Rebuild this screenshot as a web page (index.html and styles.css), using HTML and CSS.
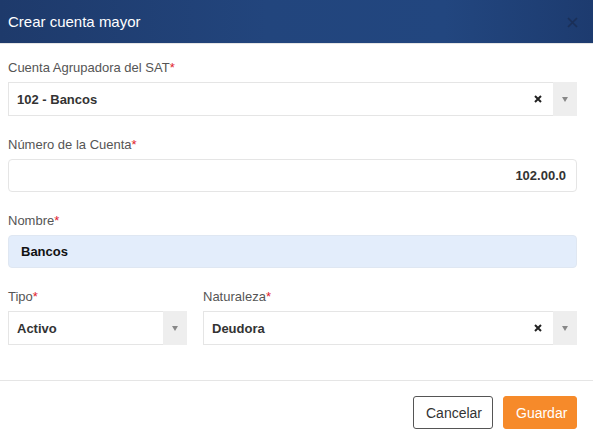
FILE: index.html
```html
<!DOCTYPE html>
<html lang="es">
<head>
<meta charset="utf-8">
<title>Crear cuenta mayor</title>
<link rel="stylesheet" href="styles.css">
</head>
<body>
<div class="modal">
  <div class="modal-header">
    <h4 class="modal-title">Crear cuenta mayor</h4>
    <span class="close-btn">
      <svg width="11" height="11" viewBox="0 0 11 11"><path d="M1 1L10 10M10 1L1 10" stroke="#1a2f57" stroke-width="1.7" fill="none"/></svg>
    </span>
  </div>
  <div class="modal-body">
    <div class="field">
      <label class="label">Cuenta Agrupadora del SAT<span class="req">*</span></label>
      <div class="select">
        <span class="select-value">102 - Bancos</span>
        <span class="select-clear"><svg width="8" height="8" viewBox="0 0 8 8"><path d="M1 1L7 7M7 1L1 7" stroke="#222" stroke-width="2" fill="none"/></svg></span>
        <span class="select-arrow"><span class="tri"></span></span>
      </div>
    </div>
    <div class="field">
      <label class="label">Número de la Cuenta<span class="req">*</span></label>
      <div class="input input-right">102.00.0</div>
    </div>
    <div class="field">
      <label class="label">Nombre<span class="req">*</span></label>
      <div class="input input-filled">Bancos</div>
    </div>
    <div class="row">
      <div class="field col-tipo">
        <label class="label">Tipo<span class="req">*</span></label>
        <div class="select">
          <span class="select-value">Activo</span>
          <span class="select-arrow"><span class="tri"></span></span>
        </div>
      </div>
      <div class="field col-nat">
        <label class="label">Naturaleza<span class="req">*</span></label>
        <div class="select">
          <span class="select-value">Deudora</span>
          <span class="select-clear"><svg width="8" height="8" viewBox="0 0 8 8"><path d="M1 1L7 7M7 1L1 7" stroke="#222" stroke-width="2" fill="none"/></svg></span>
          <span class="select-arrow"><span class="tri"></span></span>
        </div>
      </div>
    </div>
  </div>
  <div class="modal-footer">
    <button class="btn btn-default">Cancelar</button>
    <button class="btn btn-primary">Guardar</button>
  </div>
</div>
</body>
</html>
```
FILE: styles.css
```css
* { box-sizing: border-box; }
html, body { margin: 0; padding: 0; background: #fff; }
body {
  font-family: "Liberation Sans", Arial, sans-serif;
  width: 593px;
  height: 439px;
  overflow: hidden;
}
.modal { width: 593px; }
.modal-header {
  height: 44px;
  background: linear-gradient(to right, #1e3a6b 0%, #22457d 45%, #22467f 75%, #1d3b6f 100%);
  display: flex;
  align-items: center;
  justify-content: space-between;
  padding: 0 15px 0 8px;
  border-bottom: 1px solid #e5e5e5;
}
.modal-title {
  margin: 0;
  color: #fff;
  font-size: 15px;
  font-weight: normal;
  line-height: 20px;
}
.close-btn { display: flex; align-items: center; margin-top: 2px; }
.modal-body {
  padding: 15px 16px 15px 8px;
}
.field { margin-bottom: 20px; }
.label {
  display: block;
  font-size: 13px;
  color: #555;
  line-height: 18px;
  margin-bottom: 5px;
}
.req { color: #e0222d; }
.select {
  height: 34px;
  border: 1px solid #e5e5e5;
  display: flex;
  align-items: center;
  background: #fff;
}
.select-value {
  flex: 1;
  padding-left: 8px;
  font-size: 13px;
  font-weight: bold;
  color: #333;
}
.select-clear { width: 16px; display: flex; align-items: center; justify-content: flex-start; margin-right: 3px; }
.select-arrow {
  width: 24px;
  align-self: stretch;
  background: #eee;
  display: flex;
  align-items: center;
  justify-content: center;
  margin: -1px -1px -1px 0;
}
.tri {
  width: 0; height: 0;
  border-left: 3.5px solid transparent;
  border-right: 3.5px solid transparent;
  border-top: 5px solid #888;
  margin-top: 1px;
}
.input {
  height: 33px;
  border: 1px solid #e5e5e5;
  border-radius: 4px;
  font-size: 13px;
  font-weight: bold;
  color: #333;
  display: flex;
  align-items: center;
  padding: 0 10px;
}
.input-right { justify-content: flex-end; }
.input-filled {
  background: #e3edfb;
  border-color: #dfe7f2;
  color: #111;
  padding-left: 12px;
}
.row { display: flex; gap: 16px; margin-bottom: 20px; }
.row .field { margin-bottom: 0; }
.col-tipo { width: 179px; }
.col-nat { flex: 1; }
.modal-footer {
  border-top: 1px solid #e5e5e5;
  padding: 15px 16px 10px 8px;
  display: flex;
  justify-content: flex-end;
  gap: 10px;
}
.btn {
  font-family: "Liberation Sans", Arial, sans-serif;
  font-size: 14px;
  height: 33px;
  border-radius: 3px;
  padding: 0 12px;
  cursor: pointer;
}
.btn-default { background: #fff; border: 1px solid #555; color: #333; width: 80px; }
.btn-primary { background: #f68a2a; border: 1px solid #f68a2a; color: #fff; width: 74px; }
```
